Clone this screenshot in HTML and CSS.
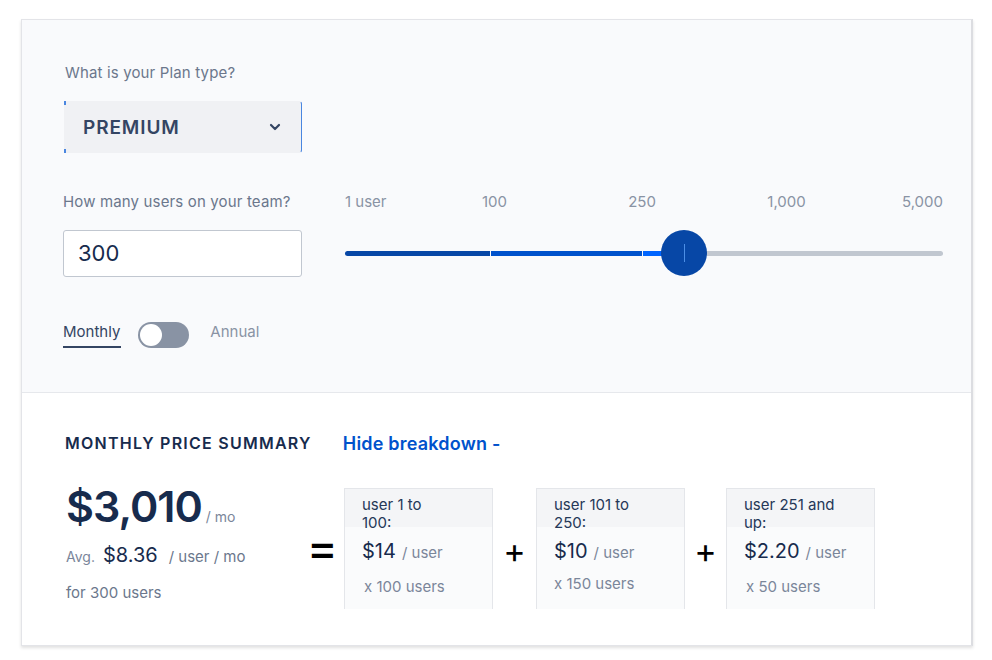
FILE: index.html
```html
<!DOCTYPE html>
<html lang="en">
<head>
<meta charset="utf-8">
<title>Pricing calculator</title>
<link rel="stylesheet" href="styles.css">
</head>
<body>
<div class="card">
  <section class="config">
    <div class="field">
      <div class="label">What is your Plan type?</div>
      <div class="select">
        <span class="select-value">PREMIUM</span>
        <svg class="chev" width="12" height="8" viewBox="0 0 12 8"><path d="M2 2 L6 6 L10 2" fill="none" stroke="#344563" stroke-width="2.2" stroke-linecap="round" stroke-linejoin="round"/></svg>
      </div>
    </div>
    <div class="users-row">
      <div class="field">
        <div class="label label-users">How many users on your team?</div>
        <div class="input">300</div>
      </div>
      <div class="slider">
        <div class="ticks">
          <span class="t t1">1 user</span>
          <span class="t t2">100</span>
          <span class="t t3">250</span>
          <span class="t t4">1,000</span>
          <span class="t t5">5,000</span>
        </div>
        <div class="track">
          <span class="seg seg-a" style="width:145px"></span>
          <span class="seg seg-b" style="width:151px"></span>
          <span class="seg seg-c" style="width:20px"></span>
          <span class="seg seg-rest"></span>
          <span class="thumb" style="left:316px"><span class="thumb-line"></span></span>
        </div>
      </div>
    </div>
    <div class="billing">
      <span class="bill-opt active">Monthly</span>
      <span class="switch"><span class="knob"></span></span>
      <span class="bill-opt">Annual</span>
    </div>
  </section>
  <section class="summary">
    <div class="summary-head">
      <h2 class="summary-title">MONTHLY PRICE SUMMARY</h2>
      <a class="toggle-link">Hide breakdown -</a>
    </div>
    <div class="summary-body">
      <div class="total">
        <div class="total-line"><span class="total-amount">$3,010</span><span class="total-unit">/ mo</span></div>
        <div class="avg-line"><span class="avg-label">Avg.</span><span class="avg-amount">$8.36</span><span class="avg-unit">/ user / mo</span></div>
        <div class="for-line">for 300 users</div>
      </div>
      <span class="op op-eq">=</span>
      <div class="tier">
        <div class="tier-head">user 1 to<br>100:</div>
        <div class="tier-price"><span class="tier-amount">$14</span><span class="tier-unit">/ user</span></div>
        <div class="tier-count">x 100 users</div>
      </div>
      <span class="op op-1">+</span>
      <div class="tier tier-2">
        <div class="tier-head">user 101 to<br>250:</div>
        <div class="tier-price"><span class="tier-amount">$10</span><span class="tier-unit">/ user</span></div>
        <div class="tier-count">x 150 users</div>
      </div>
      <span class="op op-2">+</span>
      <div class="tier">
        <div class="tier-head">user 251 and<br>up:</div>
        <div class="tier-price"><span class="tier-amount">$2.20</span><span class="tier-unit">/ user</span></div>
        <div class="tier-count">x 50 users</div>
      </div>
    </div>
  </section>
</div>
</body>
</html>
```

FILE: styles.css
```css
* { box-sizing: border-box; }
html, body { margin: 0; padding: 0; background: #ffffff; }
body {
  font-family: Inter, "Noto Sans", "Liberation Sans", sans-serif;
  color: #172b4d;
  width: 992px;
  height: 660px;
  overflow: hidden;
}
.card {
  margin: 19px 0 0 21px;
  width: 952px;
  height: 627px;
  border: 1px solid #e3e4e8;
  border-right: 2px solid #dcdde1;
  box-shadow: 0 2px 3px rgba(0, 0, 0, 0.12);
  display: flex;
  flex-direction: column;
}
.config {
  background: #f9fafc;
  height: 373px;
  padding: 44px 27px 0 41px;
  border-bottom: 1px solid #e6e8ec;
}
.label {
  font-size: 15px;
  line-height: 18px;
  color: #6b778c;
  padding-left: 2px;
  letter-spacing: 0.15px;
}
.select {
  margin-top: 19px;
  width: 238px;
  height: 52px;
  background: #f0f1f4;
  border: 1px solid transparent;
  border-right: 1.5px solid #4a86e0;
  border-radius: 3px;
  display: flex;
  align-items: center;
  justify-content: space-between;
  padding: 0 20px 0 18px;
  margin-left: 1px;
  position: relative;
}
.select::before, .select::after {
  content: "";
  position: absolute;
  left: -1px;
  width: 1.5px;
  height: 4px;
  background: #4a86e0;
}
.select::before { top: -1px; }
.select::after { bottom: -1px; }
.select-value {
  font-size: 19px;
  font-weight: 600;
  letter-spacing: 0.9px;
  color: #344563;
}
.users-row {
  margin-top: 40px;
  display: grid;
  grid-template-columns: 239px 598px;
  column-gap: 43px;
}
.label-users { padding-left: 0; }
.input {
  margin-top: 19px;
  width: 239px;
  height: 47px;
  background: #ffffff;
  border: 1px solid #c1c7d0;
  border-radius: 3px;
  font-size: 22px;
  line-height: 45px;
  padding-left: 14px;
  color: #172b4d;
}
.ticks {
  display: grid;
  grid-template-columns: repeat(8, 1fr);
  font-size: 15px;
  line-height: 18px;
  color: #8993a4;
}
.t1 { grid-column: 1 / 3; text-align: left; }
.t2 { grid-column: 2 / 4; text-align: center; }
.t3 { grid-column: 4 / 6; text-align: center; padding-right: 4px; }
.t4 { grid-column: 6 / 8; text-align: center; padding-right: 14px; }
.t5 { grid-column: 8 / 9; text-align: right; }
.t1, .t2, .t3, .t4, .t5 { grid-row: 1; }
.track {
  position: relative;
  margin-top: 40px;
  height: 5px;
  display: flex;
  gap: 1px;
}
.seg { height: 5px; display: block; }
.seg-a { background: #0747a6; border-radius: 3px 0 0 3px; }
.seg-b { background: #0052cc; }
.seg-c { background: #0065ff; }
.seg-rest { flex: 1; background: #c1c7d0; border-radius: 0 3px 3px 0; }
.thumb {
  position: absolute;
  top: -21px;
  width: 46px;
  height: 46px;
  border-radius: 50%;
  background: #0747a6;
  display: flex;
  align-items: center;
  justify-content: center;
}
.thumb-line {
  width: 1px;
  height: 18px;
  background: #4c8fe6;
}
.billing {
  margin-top: 45px;
  display: flex;
  align-items: flex-start;
  height: 26px;
  font-size: 15px;
}
.bill-opt { color: #8993a4; line-height: 18px; padding-top: 1px; }
.bill-opt.active {
  color: #344563;
  padding: 1px 1px 5px 0;
  border-bottom: 2px solid #344563;
}
.switch {
  margin: 0 21px 0 17px;
  width: 51px;
  height: 26px;
  border-radius: 13px;
  background: #8993a4;
  padding: 2px;
  display: flex;
}
.knob {
  width: 22px;
  height: 22px;
  border-radius: 50%;
  background: #ffffff;
}
.summary {
  flex: 1;
  background: #ffffff;
  padding: 40px 0 0 43px;
}
.summary-head {
  display: flex;
  align-items: center;
  height: 20px;
}
.summary-title {
  margin: 0;
  font-size: 16px;
  font-weight: 600;
  letter-spacing: 1.25px;
  color: #172b4d;
}
.toggle-link {
  margin-left: 31px;
  font-size: 18px;
  font-weight: 600;
  letter-spacing: 0.2px;
  color: #0052cc;
}
.summary-body {
  margin-top: 35px;
  display: flex;
  align-items: flex-start;
}
.total { width: 244px; padding-left: 1px; }
.total-line { display: flex; align-items: baseline; height: 36px; }
.total-amount {
  font-size: 43px;
  font-weight: 600;
  line-height: 36px;
  letter-spacing: -1px;
  color: #172b4d;
}
.total-unit { margin-left: 4px; font-size: 14px; color: #7a869a; }
.avg-line { margin-top: 19px; display: flex; align-items: baseline; line-height: 24px; }
.avg-label { font-size: 14px; color: #7a869a; }
.avg-amount { margin-left: 8px; font-size: 20px; color: #172b4d; }
.avg-unit { margin-left: 11px; font-size: 15px; color: #6b778c; }
.for-line { margin-top: 15px; font-size: 15px; line-height: 18px; color: #6b778c; }
.op {
  font-size: 34px;
  font-weight: 400;
  color: #000000;
  line-height: 34px;
  margin-top: 46px;
  text-align: center;
}
.op-eq { width: 35px; text-align: left; font-size: 46px; font-weight: 500; margin-top: 42px; margin-left: -2px; padding-right: 0; }
.op-1 { width: 43px; }
.op-2 { width: 41px; }
.tier {
  width: 149px;
  height: 121px;
  border: 1px solid #e4e6ea;
  border-bottom: none;
  background: linear-gradient(#f4f5f7 0, #f4f5f7 38px, #fafbfc 38px);
  padding: 7px 0 0 17px;
}
.op-eq + .tier { margin-left: 2px; }
.tier-head { font-size: 15px; line-height: 18px; color: #253858; }
.tier-price { margin-top: 7px; display: flex; align-items: baseline; }
.tier-amount { font-size: 20px; color: #172b4d; }
.tier-unit { margin-left: 6px; font-size: 15px; color: #7a869a; }
.tier-count { margin-top: 14px; font-size: 15px; color: #7a869a; padding-left: 2px; }
.tier-2 .tier-count { margin-top: 11px; padding-left: 0; }
```
